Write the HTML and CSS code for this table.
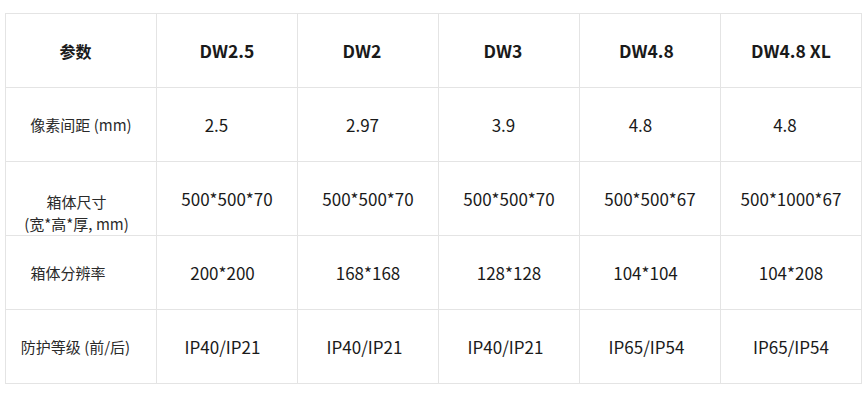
FILE: index.html
```html
<!DOCTYPE html>
<html lang="zh-CN">
<head>
<meta charset="utf-8">
<title>参数</title>
<link rel="stylesheet" href="styles.css">
</head>
<body>
<table class="spec">
  <colgroup>
    <col class="c-first">
    <col class="c-data"><col class="c-data"><col class="c-data"><col class="c-data"><col class="c-data">
  </colgroup>
  <tr class="head">
    <td class="label s5">参数</td>
    <td>DW2.5</td>
    <td class="s6">DW2</td>
    <td class="s6">DW3</td>
    <td class="s3">DW4.8</td>
    <td>DW4.8 XL</td>
  </tr>
  <tr>
    <td class="label">像素间距 (mm)</td>
    <td class="s10">2.5</td>
    <td class="s5">2.97</td>
    <td class="s5">3.9</td>
    <td class="s9">4.8</td>
    <td class="s6">4.8</td>
  </tr>
  <tr>
    <td class="label s4 two">箱体尺寸<br>(宽*高*厚, mm)</td>
    <td>500*500*70</td>
    <td>500*500*70</td>
    <td>500*500*70</td>
    <td>500*500*67</td>
    <td>500*1000*67</td>
  </tr>
  <tr>
    <td class="label s13">箱体分辨率</td>
    <td class="s4">200*200</td>
    <td>168*168</td>
    <td>128*128</td>
    <td class="s4">104*104</td>
    <td>104*208</td>
  </tr>
  <tr>
    <td class="label s5">防护等级 (前/后)</td>
    <td class="s4">IP40/IP21</td>
    <td class="s3">IP40/IP21</td>
    <td class="s3">IP40/IP21</td>
    <td class="s3">IP65/IP54</td>
    <td>IP65/IP54</td>
  </tr>
</table>
</body>
</html>
```
FILE: styles.css
```css
html, body {
  margin: 0;
  padding: 0;
  background: #ffffff;
}
body {
  padding: 13px 0 0 5px;
  font-family: "Noto Sans CJK SC", "Noto Sans", sans-serif;
  color: #1a1a1a;
}
.spec {
  border-collapse: collapse;
  table-layout: fixed;
  width: 857px;
}
.c-first { width: 151px; }
.c-data { width: 141px; }
.spec td {
  border: 1px solid #e4e4e4;
  height: 74px;
  padding: 0;
  text-align: center;
  vertical-align: middle;
  font-size: 17px;
  line-height: 22px;
  box-sizing: border-box;
}
.spec .head td {
  font-weight: 700;
  font-size: 17.5px;
}
.spec td.label {
  font-size: 15px;
  color: #2a2a2a;
}
.spec .head td.label {
  font-size: 16px;
  color: #1a1a1a;
}
.spec td.two {
  padding-top: 28px;
}
.spec td.s3 { padding-right: 7px; }
.spec td.s4 { padding-right: 9px; }
.spec td.s5 { padding-right: 11px; }
.spec td.s6 { padding-right: 12px; }
.spec td.s9 { padding-right: 19px; }
.spec td.s10 { padding-right: 21px; }
.spec td.s13 { padding-right: 26px; }
```
